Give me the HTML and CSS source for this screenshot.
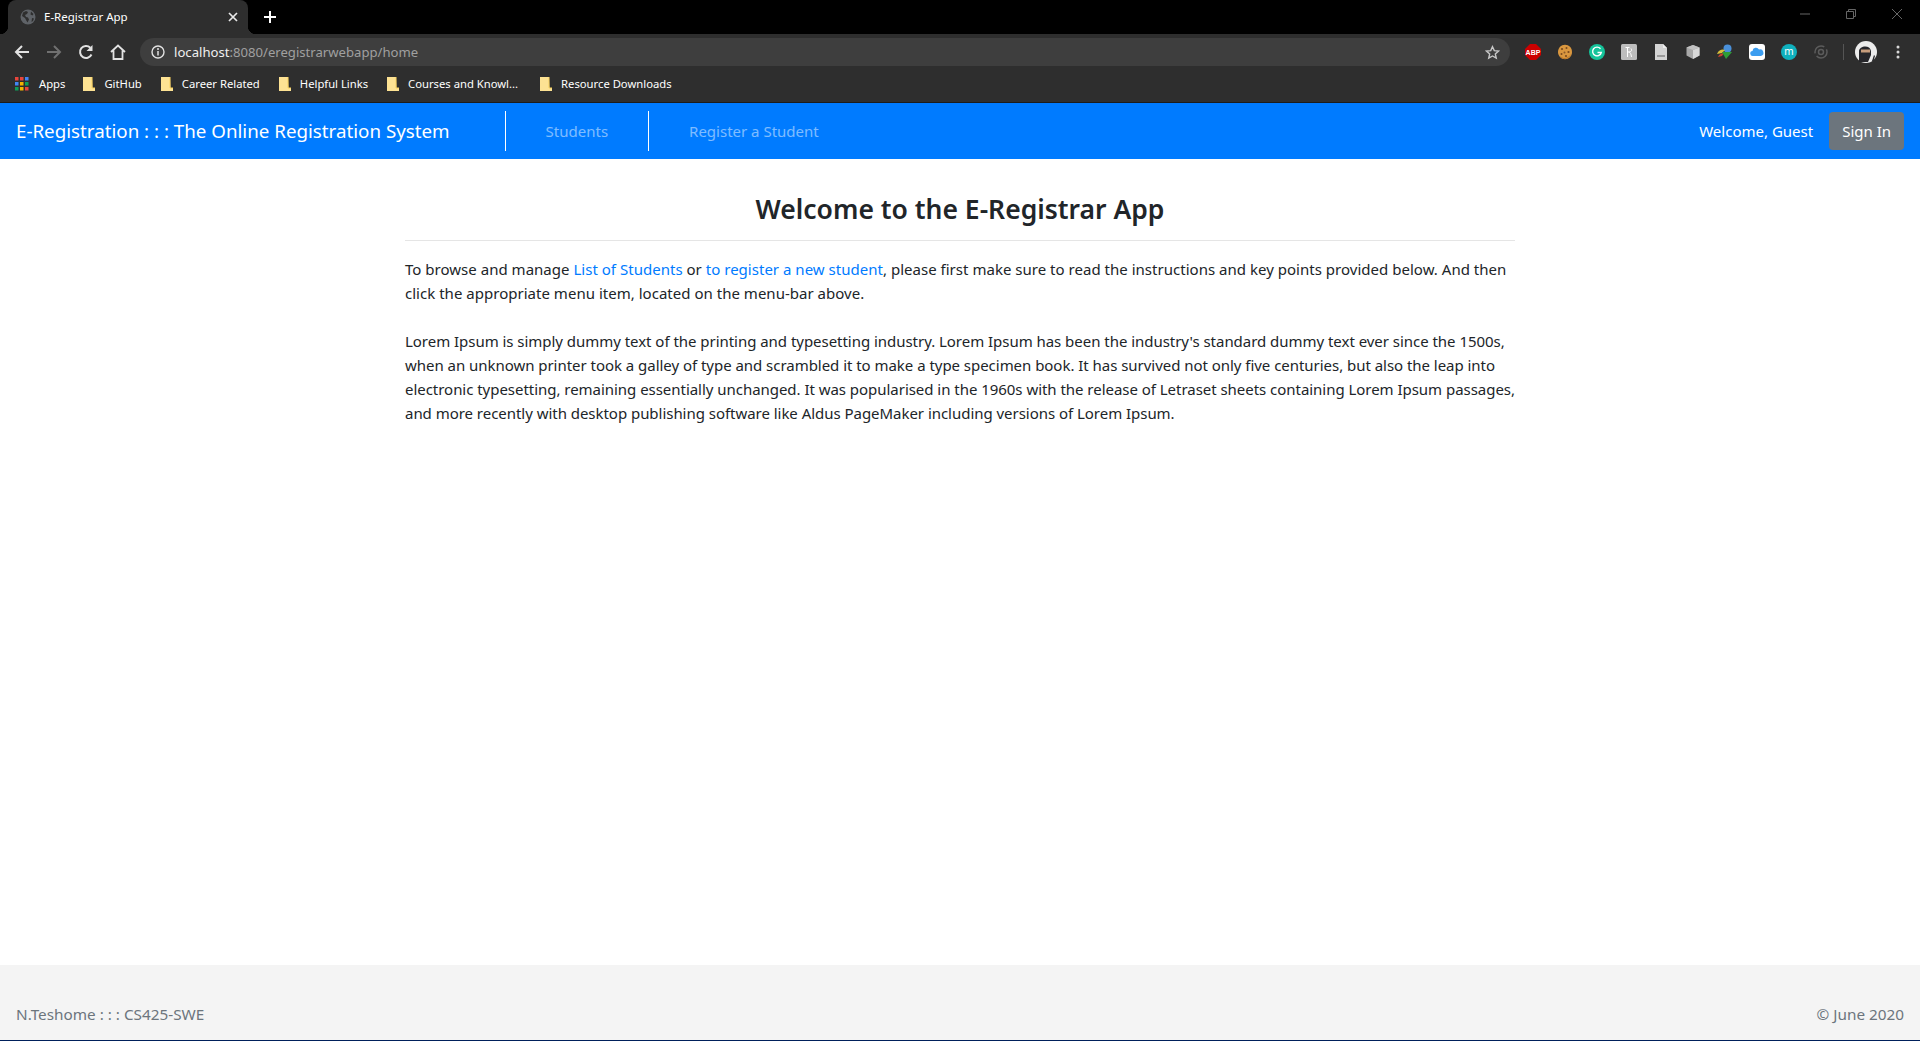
FILE: index.html
```html
<!DOCTYPE html>
<html lang="en">
<head>
    <meta charset="UTF-8">
    <title>E-Registrar App</title>
    <link rel="stylesheet" href="styles.css">
</head>
<body>
    <div class="browser">
        <div class="tabstrip">
            <div class="tab">
                <svg class="tab-globe" width="16" height="16" viewBox="0 0 16 16"><circle cx="8" cy="8" r="7.5" fill="#5f6368"/><path d="M3 3.5l3-1.5 2 1-1 2-2 1 1 2 2 .5 1 2-1.5 3L6 11 5 9 2 7zM11 2.5l2.5 2.5-1 1.500-2-1zM12 9l2 .5-1 2.500-1.500 1z" fill="#2e2e2e"/></svg>
                <span class="tab-title">E-Registrar App</span>
                <svg class="tab-close" width="10" height="10" viewBox="0 0 10 10"><path d="M1 1l8 8M9 1l-8 8" stroke="#e8e8e8" stroke-width="1.700"/></svg>
            </div>
            <svg class="new-tab" width="14" height="14" viewBox="0 0 14 14"><path d="M7 1v12M1 7h12" stroke="#fff" stroke-width="2"/></svg>
            <div class="window-controls">
                <svg width="10" height="10" viewBox="0 0 10 10"><path d="M0 5h10" stroke="#666" stroke-width="1"/></svg>
                <svg width="10" height="10" viewBox="0 0 10 10"><path d="M.5 2.500h7v7h-7zM2.500 2.500v-2h7v7h-2" fill="none" stroke="#666" stroke-width="1"/></svg>
                <svg width="10" height="10" viewBox="0 0 10 10"><path d="M0 0l10 10M10 0L0 10" stroke="#666" stroke-width="1"/></svg>
            </div>
        </div>

        <div class="toolbar">
            <div class="nav-buttons">
                <svg width="16" height="16" viewBox="0 0 16 16"><path d="M15 8H2M8 2L2 8l6 6" fill="none" stroke="#e2e2e2" stroke-width="2"/></svg>
                <svg width="16" height="16" viewBox="0 0 16 16"><path d="M1 8h13M8 2l6 6-6 6" fill="none" stroke="#707070" stroke-width="2"/></svg>
                <svg width="16" height="16" viewBox="0 0 16 16"><path d="M13.500 10.500A6 6 0 1 1 12.300 3.700" fill="none" stroke="#e2e2e2" stroke-width="2"/><path d="M14.500 1v6h-6z" fill="#e2e2e2"/></svg>
                <svg width="16" height="16" viewBox="0 0 16 16"><path d="M1 8l7-6.500L15 8M3.500 6.500V15h9V6.500" fill="none" stroke="#e2e2e2" stroke-width="1.800"/></svg>
            </div>
            <div class="omnibox">
                <svg width="14" height="14" viewBox="0 0 14 14"><circle cx="7" cy="7" r="6" fill="none" stroke="#e2e2e2" stroke-width="1.400"/><path d="M7 6v4.500" stroke="#e2e2e2" stroke-width="1.500"/><circle cx="7" cy="4" r="1" fill="#e2e2e2"/></svg>
                <span class="url"><span class="url-host">localhost</span>:8080/eregistrarwebapp/home</span>
                <svg class="star" width="15" height="15" viewBox="0 0 16 16"><path d="M8 1.800l1.900 4.200 4.500.5-3.400 3 1 4.500L8 11.700 4 14l1-4.500-3.400-3 4.500-.5z" fill="none" stroke="#c8c8c8" stroke-width="1.500"/></svg>
            </div>
            <div class="extensions">
                <svg width="16" height="16" viewBox="0 0 16 16"><path d="M5 0h6l5 5v6l-5 5H5l-5-5V5z" fill="#c00"/><text x="8" y="10.500" class="abp-text">ABP</text></svg>
                <svg width="16" height="16" viewBox="0 0 16 16"><path d="M8 .8c4 0 7 3 7 7.200s-3 7.200-7 7.200S1 12 1 8 4 .8 8 .8z" fill="#d9973f"/><path d="M3 12c3 3 8 3 11-2-1 5-9 7-11 2z" fill="#b87424"/><circle cx="5" cy="5" r="1.100" fill="#7a4a1e"/><circle cx="9.500" cy="4" r="1" fill="#7a4a1e"/><circle cx="11.500" cy="8" r="1.100" fill="#7a4a1e"/><circle cx="7.500" cy="8.500" r="1" fill="#8a5a2a"/><circle cx="4.500" cy="10" r="1" fill="#7a4a1e"/><circle cx="9" cy="12" r="1.100" fill="#7a4a1e"/></svg>
                <svg width="16" height="16" viewBox="0 0 16 16"><circle cx="8" cy="8" r="8" fill="#15c39a"/><path d="M11.500 4.800a4.400 4.400 0 1 0 .8 3.700H8.500" fill="none" stroke="#fff" stroke-width="1.400"/></svg>
                <svg width="16" height="16" viewBox="0 0 16 16"><rect width="16" height="16" rx="1.500" fill="#bdbdbd"/><path d="M6.500 3v10M4.500 3.500h4M6.500 8c3.500 0 5-1 3.500-3.500M7.500 8c2 0 2.500 2 3 5" fill="none" stroke="#fff" stroke-width="1"/></svg>
                <svg width="16" height="16" viewBox="0 0 16 16"><path d="M2 0h8l4 4v12H2z" fill="#d4d4d4"/><path d="M10 0l4 4h-4z" fill="#eee"/><rect x="4" y="11" width="8" height="2" fill="#9a9a9a"/></svg>
                <svg width="16" height="16" viewBox="0 0 16 16"><path d="M8 1l6.500 2.500v8L8 15l-6.500-3.500v-8z" fill="#a8a8a8"/><path d="M8 6l6.500-2.500v8L8 15z" fill="#d8d8d8"/><path d="M8 1l6.500 2.500L8 6 1.500 3.500z" fill="#c2c2c2"/></svg>
                <svg width="16" height="16" viewBox="0 0 16 16"><circle cx="10.500" cy="4.500" r="4" fill="#4a90d9"/><path d="M0 10c2-5 6-5 8-4l-3 3z" fill="#d8c03a"/><path d="M1 13c1-3 4-4 6-4l-2 3z" fill="#c9432e"/><path d="M5 8h10l-6 7z" fill="#2f9e37"/></svg>
                <svg width="16" height="16" viewBox="0 0 16 16"><rect width="16" height="16" rx="3" fill="#fff"/><path d="M4 12a2.500 2.500 0 0 1-.5-5A3.500 3.500 0 0 1 10 5.500 3.300 3.300 0 0 1 12 12z" fill="#3b9df0"/></svg>
                <svg width="16" height="16" viewBox="0 0 16 16"><circle cx="8" cy="8" r="8" fill="#0fb0bd"/><text x="8" y="11" class="ext-m">m</text></svg>
                <svg width="16" height="16" viewBox="0 0 16 16"><circle cx="8" cy="8" r="6" fill="none" stroke="#5c5c5c" stroke-width="1.500" stroke-dasharray="14 3"/><circle cx="8" cy="8" r="2.500" fill="none" stroke="#5c5c5c" stroke-width="1.500"/></svg>
            </div>
            <span class="toolbar-sep"></span>
            <svg class="avatar" width="22" height="22" viewBox="0 0 22 22"><circle cx="11" cy="11" r="11" fill="#ececec"/><path d="M4 21V10c0-5 11-7 12 0v4l-3 7z" fill="#26262a"/><rect x="6" y="8.500" width="9" height="3" fill="#c69c7c"/><path d="M17 20l2-6 1 1-1.500 5z" fill="#26262a"/></svg>
            <svg class="menu-dots" width="4" height="14" viewBox="0 0 4 14"><circle cx="2" cy="2" r="1.500" fill="#d8d8d8"/><circle cx="2" cy="7" r="1.500" fill="#d8d8d8"/><circle cx="2" cy="12" r="1.500" fill="#d8d8d8"/></svg>
        </div>

        <div class="bookmarks">
            <div class="bookmark bookmark-apps">
                <svg width="14" height="14" viewBox="0 0 14 14"><rect width="3.500" height="3.500" fill="#e8453c"/><rect x="5" width="3.500" height="3.500" fill="#e8453c"/><rect x="10" width="3.500" height="3.500" fill="#4285f4"/><rect y="5" width="3.500" height="3.500" fill="#4285f4"/><rect x="5" y="5" width="3.500" height="3.500" fill="#f4b400"/><rect x="10" y="5" width="3.500" height="3.500" fill="#0f9d58"/><rect y="10" width="3.500" height="3.500" fill="#0f9d58"/><rect x="5" y="10" width="3.500" height="3.500" fill="#f4b400"/><rect x="10" y="10" width="3.500" height="3.500" fill="#e8453c"/></svg>
                <span>Apps</span>
            </div>
            <div class="bookmark"><svg width="12" height="14" viewBox="0 0 12 14"><path d="M0 0h9l.5 11H12v3H0z" fill="#fde293"/><path d="M9 0v11h3" fill="none" stroke="#f9d25f" stroke-width="1"/></svg><span>GitHub</span></div>
            <div class="bookmark"><svg width="12" height="14" viewBox="0 0 12 14"><path d="M0 0h9l.5 11H12v3H0z" fill="#fde293"/><path d="M9 0v11h3" fill="none" stroke="#f9d25f" stroke-width="1"/></svg><span>Career Related</span></div>
            <div class="bookmark"><svg width="12" height="14" viewBox="0 0 12 14"><path d="M0 0h9l.5 11H12v3H0z" fill="#fde293"/><path d="M9 0v11h3" fill="none" stroke="#f9d25f" stroke-width="1"/></svg><span>Helpful Links</span></div>
            <div class="bookmark bookmark-long"><svg width="12" height="14" viewBox="0 0 12 14"><path d="M0 0h9l.5 11H12v3H0z" fill="#fde293"/><path d="M9 0v11h3" fill="none" stroke="#f9d25f" stroke-width="1"/></svg><span>Courses and Knowl...</span></div>
            <div class="bookmark"><svg width="12" height="14" viewBox="0 0 12 14"><path d="M0 0h9l.5 11H12v3H0z" fill="#fde293"/><path d="M9 0v11h3" fill="none" stroke="#f9d25f" stroke-width="1"/></svg><span>Resource Downloads</span></div>
        </div>
    </div>

    <nav class="navbar">
        <a class="brand" href="#">E-Registration : : : The Online Registration System</a>
        <ul class="nav-links">
            <li><a href="#">Students</a></li>
            <li><a href="#">Register a Student</a></li>
        </ul>
        <span class="welcome">Welcome, Guest</span>
        <a class="btn-signin" href="#">Sign In</a>
    </nav>

    <main class="content">
        <h2>Welcome to the E-Registrar App</h2>
        <hr>
        <p class="intro">To browse and manage <a href="#">List of Students</a> or <a href="#">to register a new student</a>, please first make sure to read the instructions and key points provided below. And then click the appropriate menu item, located on the menu-bar above.</p>
        <p>Lorem Ipsum is simply dummy text of the printing and typesetting industry. Lorem Ipsum has been the industry's standard dummy text ever since the 1500s, when an unknown printer took a galley of type and scrambled it to make a type specimen book. It has survived not only five centuries, but also the leap into electronic typesetting, remaining essentially unchanged. It was popularised in the 1960s with the release of Letraset sheets containing Lorem Ipsum passages, and more recently with desktop publishing software like Aldus PageMaker including versions of Lorem Ipsum.</p>
    </main>

    <footer class="footer">
        <span>N.Teshome : : : CS425-SWE</span>
        <span>© June 2020</span>
    </footer>
</body>
</html>
```

FILE: styles.css
```css
* {
    box-sizing: border-box;
}

html, body {
    height: 100%;
}

body {
    margin: 0;
    display: flex;
    flex-direction: column;
    height: 1041px;
    overflow: hidden;
    font-family: "Noto Sans", "Open Sans", Arial, sans-serif;
    font-size: 15px;
    line-height: 24px;
    color: #212529;
    background-color: #fff;
}

a {
    color: #007bff;
    text-decoration: none;
}

/* browser chrome */
.browser {
    background-color: #2e2e2e;
    color: #fff;
    font-size: 11.25px;
    border-bottom: 1px solid #1c1c1c;
}

.tabstrip {
    display: flex;
    align-items: center;
    height: 34px;
    background-color: #000;
}

.tab {
    position: relative;
    display: flex;
    align-items: center;
    width: 240px;
    height: 34px;
    margin-left: 8px;
    padding: 0 10px 0 12px;
    background-color: #2e2e2e;
    border-radius: 8px 8px 0 0;
}

.tab::before,
.tab::after {
    content: "";
    position: absolute;
    bottom: 0;
    width: 8px;
    height: 8px;
}

.tab::before {
    left: -8px;
    background: radial-gradient(circle at 0 0, #000 8px, #2e2e2e 8.500px);
}

.tab::after {
    right: -8px;
    background: radial-gradient(circle at 100% 0, #000 8px, #2e2e2e 8.500px);
}

.tab-title {
    flex: 1;
    margin-left: 8px;
    font-size: 11.500px;
}

.new-tab {
    margin-left: 15px;
}

.window-controls {
    display: flex;
    align-items: center;
    gap: 36px;
    margin-left: auto;
    margin-right: 18px;
    margin-top: -6px;
}

.toolbar {
    display: flex;
    align-items: center;
    height: 34px;
    padding-top: 2px;
}

.nav-buttons {
    display: flex;
    align-items: center;
    gap: 16px;
    padding-left: 14px;
}

.omnibox {
    display: flex;
    align-items: center;
    flex: none;
    width: 1370px;
    height: 28px;
    margin-left: 14px;
    padding: 0 10px 0 11px;
    background-color: #3e3e3e;
    border-radius: 14px;
}

.url {
    margin-left: 9px;
    font-size: 13.130px;
    color: #a0a0a0;
}

.url-host {
    color: #f0f0f0;
}

.star {
    margin-left: auto;
}

.extensions {
    display: flex;
    align-items: center;
    gap: 16px;
    margin-left: 15px;
}

.abp-text {
    font-family: "Liberation Sans", Arial, sans-serif;
    font-size: 7px;
    font-weight: bold;
    fill: #fff;
    text-anchor: middle;
}

.ext-m {
    font-size: 10px;
    fill: #fff;
    text-anchor: middle;
}

.toolbar-sep {
    width: 1px;
    height: 16px;
    margin-left: 14px;
    background-color: #555;
}

.avatar {
    margin-left: 11px;
}

.menu-dots {
    margin-left: 19px;
}

.bookmarks {
    display: flex;
    align-items: center;
    gap: 19px;
    height: 34px;
    padding-left: 83px;
    padding-bottom: 3px;
}

.bookmark {
    display: flex;
    align-items: center;
    gap: 9px;
}

.bookmark-apps {
    gap: 10px;
    margin-left: -68px;
    margin-right: -1px;
}

.bookmark-long {
    margin-right: 3px;
}

/* site navbar */
.navbar {
    display: flex;
    align-items: center;
    flex: none;
    height: 56px;
    padding: 0 16px;
    background-color: #007bff;
}

.brand {
    margin-right: 55px;
    font-size: 18.750px;
    color: #fff;
}

.nav-links {
    display: flex;
    flex: 1;
    margin: 0;
    padding: 0;
    list-style: none;
}

.nav-links li {
    border-left: 1px solid #fff;
    padding: 8px 40px;
}

.nav-links a {
    color: rgba(255, 255, 255, 0.5);
}

.welcome {
    margin-right: 16px;
    color: #fff;
}

.btn-signin {
    padding: 7px 13px;
    color: #fff;
    background-color: #6c757d;
    border-radius: 4px;
}

/* page content */
.content {
    flex: 1;
    width: 1110px;
    margin: 0 auto;
    padding-top: 30px;
}

.content h2 {
    margin: 0;
    font-size: 26.500px;
    font-weight: 600;
    line-height: 40px;
    text-align: center;
}

.content hr {
    margin: 11px 0 16px;
    border: 0;
    border-top: 1px solid rgba(0, 0, 0, 0.1);
}

.content p {
    margin: 0 0 24px;
    letter-spacing: -0.035px;
}

.content .intro {
    letter-spacing: 0.02px;
}

.footer {
    display: flex;
    justify-content: space-between;
    flex: none;
    height: 76px;
    padding: 37px 16px 0;
    font-size: 15.300px;
    color: #6c757d;
    background-color: #f4f4f4;
    border-bottom: 1px solid #00205b;
}
```
